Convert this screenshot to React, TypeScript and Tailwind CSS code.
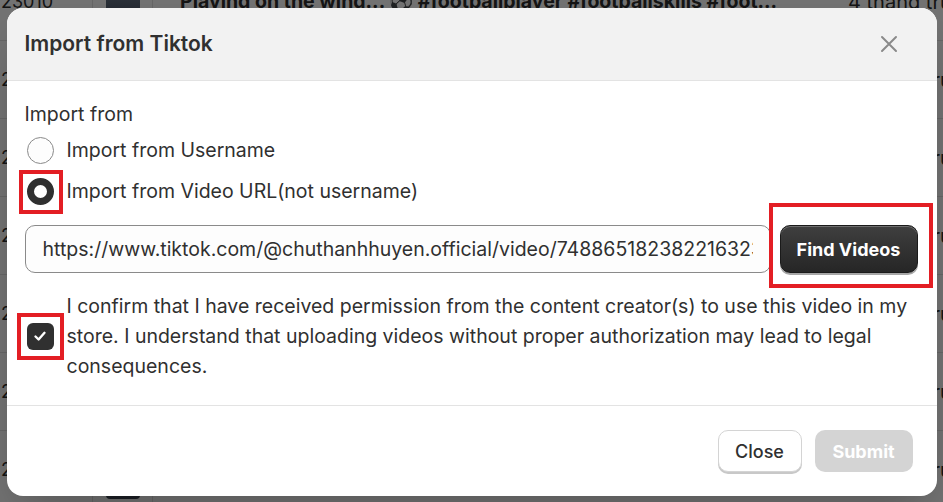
import React, { useState } from 'react';

// Rows of the video table behind the dialog
interface VideoRow {
  id: string;
  title: string;
  date: string;
}

const rows: VideoRow[] = [
  { id: '23010', title: 'Playing on the wing... ⚽ #footballplayer #footballskills #foot...', date: '4 tháng trước' },
  { id: '23009', title: 'Morning training session with the team #football #training...', date: '4 tháng trước' },
  { id: '23008', title: 'Free kick practice 🎯 #freekick #footballskills #goals...', date: '4 tháng trước' },
  { id: '23007', title: 'Match day highlights ⚽ #matchday #footballplayer #highlig...', date: '4 tháng trước' },
  { id: '23006', title: 'Dribbling drills in the rain #dribbling #footballskills...', date: '4 tháng trước' },
  { id: '23005', title: 'Recovery day stretching routine #recovery #fitness #footb...', date: '4 tháng trước' },
  { id: '23004', title: 'Behind the scenes at the stadium #stadium #football #vlog...', date: '4 tháng trước' },
];

const font = { fontFamily: 'Inter, "Noto Sans", sans-serif' };

function CloseIcon() {
  return (
    <svg width="18" height="18" viewBox="0 0 18 18" fill="none">
      <path d="M2 2L16 16M16 2L2 16" stroke="#8a8a8a" strokeWidth="2" strokeLinecap="round" />
    </svg>
  );
}

function CheckIcon() {
  return (
    <svg width="14" height="14" viewBox="0 0 14 14" fill="none">
      <path d="M2.5 7.5L5.6 10.5L11.5 3.8" stroke="#ffffff" strokeWidth="2.4" strokeLinecap="round" strokeLinejoin="round" />
    </svg>
  );
}

export default function App() {
  const [mode, setMode] = useState<'username' | 'url'>('url');
  const [agreed, setAgreed] = useState(true);
  const [url, setUrl] = useState('https://www.tiktok.com/@chuthanhhuyen.official/video/7488651823822163238');

  return (
    <div className="relative h-[502px] w-full overflow-hidden bg-white text-[#303030]" style={font}>
      {/* page behind the dialog */}
      <div className="-mt-[37px]">
        {rows.map((row) => (
          <div key={row.id} className="flex h-[78px] items-center border-b border-[#e3e3e3]">
            <div className="flex h-full w-[93px] shrink-0 items-center border-r border-[#e3e3e3] pl-[1px] text-[18px]">
              {row.id}
            </div>
            <div className="flex h-full w-[60px] shrink-0 items-center justify-center border-r border-[#e3e3e3]">
              <div className="h-[58px] w-[34px] rounded-[4px] bg-gradient-to-b from-[#7d8ea6] to-[#3c4450]" />
            </div>
            <div className="ml-[27px] w-[600px] shrink-0 truncate text-[19.5px] font-bold">{row.title}</div>
            <div className="ml-auto w-[95px] shrink-0 overflow-hidden whitespace-nowrap text-[20px]">{row.date}</div>
          </div>
        ))}
      </div>

      {/* dim overlay with the dialog */}
      <div className="absolute inset-0 flex justify-center bg-black/55 pt-[8px]">
        <div className="flex h-[488px] w-[930px] flex-col overflow-hidden rounded-[16px] bg-white shadow-2xl">
          {/* header */}
          <div className="flex h-[73px] shrink-0 items-center justify-between border-b border-[#e3e3e3] bg-[#f2f2f2] pl-[18px] pr-[38px]">
            <h2 className="text-[21px] font-semibold text-[#303030]">Import from Tiktok</h2>
            <button type="button" className="flex h-[20px] w-[20px] items-center justify-center">
              <CloseIcon />
            </button>
          </div>

          {/* body */}
          <div className="flex flex-col border-b border-[#e3e3e3] pl-[18px] pr-[19px] pt-[21px] pb-[24px]">
            <div className="h-[24px] text-[19.5px] leading-[24px]">Import from</div>

            <label className="mt-[4px] flex h-[41px] items-center gap-[13px]" onClick={() => setMode('username')}>
              <span className="relative ml-[2px] flex h-[27px] w-[27px] items-center justify-center">
                <span
                  className={
                    mode === 'username'
                      ? 'h-[27px] w-[27px] rounded-full border-[7px] border-[#303030] bg-white'
                      : 'h-[27px] w-[27px] rounded-full border border-[#8a8a8a] bg-[#fdfdfd]'
                  }
                />
              </span>
              <span className="text-[19.5px]">Import from Username</span>
            </label>

            <label className="flex h-[41px] items-center gap-[13px]" onClick={() => setMode('url')}>
              <span className="relative ml-[2px] flex h-[27px] w-[27px] items-center justify-center">
                <span
                  className={
                    mode === 'url'
                      ? 'h-[27px] w-[27px] rounded-full border-[7px] border-[#303030] bg-white'
                      : 'h-[27px] w-[27px] rounded-full border border-[#8a8a8a] bg-[#fdfdfd]'
                  }
                />
                <span className="absolute -left-[8px] -top-[8px] h-[44px] w-[44px] border-[4px] border-[#e31e24]" />
              </span>
              <span className="text-[19.5px]">Import from Video URL(not username)</span>
            </label>

            <div className="mt-[13px] flex items-center gap-[9px]">
              <input
                value={url}
                onChange={(e) => setUrl(e.target.value)}
                className="h-[48px] w-[746px] rounded-[10px] border border-[#8a8a8a] bg-[#fdfdfd] px-[17px] text-[19.5px] text-[#303030] outline-none"
                style={font}
              />
              <div className="relative">
                <button
                  type="button"
                  className="h-[48px] w-[138px] rounded-[10px] border border-[#1a1a1a] bg-gradient-to-b from-[#3f3f3f] to-[#262626] text-[18px] font-bold text-white shadow-[inset_0_1px_0_rgba(255,255,255,0.25),0_2px_0_rgba(0,0,0,0.35)]"
                >
                  Find Videos
                </button>
                <span className="absolute -left-[11px] -top-[22px] h-[85px] w-[164px] border-[4px] border-[#e31e24]" />
              </div>
            </div>

            <label className="mt-[18px] flex items-center gap-[13px]" onClick={() => setAgreed(!agreed)}>
              <span className="relative ml-[2px] flex h-[27px] w-[27px] shrink-0 items-center justify-center">
                <span
                  className={
                    agreed
                      ? 'flex h-[27px] w-[27px] items-center justify-center rounded-[6px] bg-[#303030]'
                      : 'flex h-[27px] w-[27px] items-center justify-center rounded-[6px] border border-[#8a8a8a] bg-white'
                  }
                >
                  {agreed && <CheckIcon />}
                </span>
                <span className="absolute -left-[10px] -top-[10px] h-[47px] w-[47px] border-[4px] border-[#e31e24]" />
              </span>
              <span className="text-[19.5px] leading-[30px]">
                I confirm that I have received permission from the content creator(s) to use this video in my store. I
                understand that uploading videos without proper authorization may lead to legal consequences.
              </span>
            </label>
          </div>

          {/* footer */}
          <div className="flex flex-1 items-center justify-end gap-[13px] pr-[24px]">
            <button
              type="button"
              className="h-[42px] w-[84px] rounded-[10px] border border-[#d4d4d4] bg-white text-[18px] font-medium text-[#303030] shadow-[0_2px_0_#c8c8c8]"
            >
              Close
            </button>
            <button
              type="button"
              disabled
              className="h-[42px] w-[98px] rounded-[10px] bg-[#d4d4d4] text-[18px] font-bold text-white"
            >
              Submit
            </button>
          </div>
        </div>
      </div>
    </div>
  );
}
